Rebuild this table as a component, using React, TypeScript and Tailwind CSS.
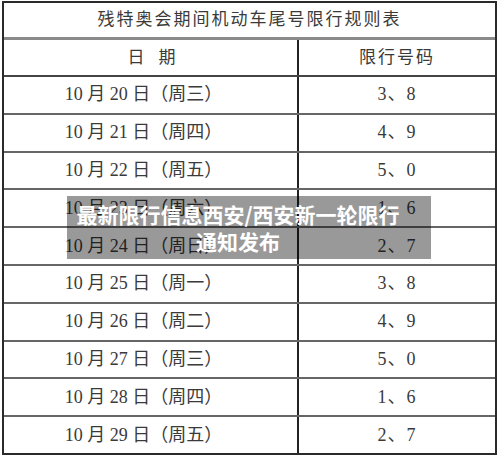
const rows = [
  ["10 月 20 日（周三）", "3、8"],
  ["10 月 21 日（周四）", "4、9"],
  ["10 月 22 日（周五）", "5、0"],
  ["10 月 23 日（周六）", "1、6"],
  ["10 月 24 日（周日）", "2、7"],
  ["10 月 25 日（周一）", "3、8"],
  ["10 月 26 日（周二）", "4、9"],
  ["10 月 27 日（周三）", "5、0"],
  ["10 月 28 日（周四）", "1、6"],
  ["10 月 29 日（周五）", "2、7"],
];

const serif = {
  fontFamily: '"Liberation Serif", "Noto Sans CJK SC", serif',
};

export default function App() {
  return (
    <div className="relative w-[500px] h-[456px] bg-white overflow-hidden">
      <div
        className="ml-[2px] mt-[1px] w-[495px] h-[454px] border-2 border-[#2a2a2a] flex flex-col text-[#3a3a3a]"
        style={serif}
      >
        <div className="h-[37px] flex items-center justify-center text-[17px] tracking-[2px] border-b-[3px] border-[#8a8a8a]">
          残特奥会期间机动车尾号限行规则表
        </div>
        <div className="h-[37px] flex border-b-2 border-[#444]">
          <div className="w-[295px] flex items-center justify-center text-[17px] border-r-2 border-[#222] tracking-[14px] pl-[16px]">
            日期
          </div>
          <div className="flex-1 flex items-center justify-center text-[17px] tracking-[2px]">
            限行号码
          </div>
        </div>
        {rows.map(([d, n], i) => (
          <div
            key={i}
            className={
              "flex-1 flex " + (i < rows.length - 1 ? "border-b-2 border-[#666]" : "")
            }
          >
            <div className="w-[295px] flex items-center justify-center pr-[14px] text-[18px] border-r-2 border-[#222]">
              {d}
            </div>
            <div className="flex-1 flex items-center justify-center text-[18px] tracking-[1px]">
              {n}
            </div>
          </div>
        ))}
      </div>
      <div
        className="absolute left-[67px] top-[196px] w-[364px] h-[63px] bg-black/40 flex items-center justify-center pr-[22px]"
        style={{ fontFamily: '"Noto Sans CJK SC", sans-serif' }}
      >
        <p className="text-white font-bold text-[21px] leading-[27px] text-center">
          最新限行信息西安/西安新一轮限行通知发布
        </p>
      </div>
    </div>
  );
}
